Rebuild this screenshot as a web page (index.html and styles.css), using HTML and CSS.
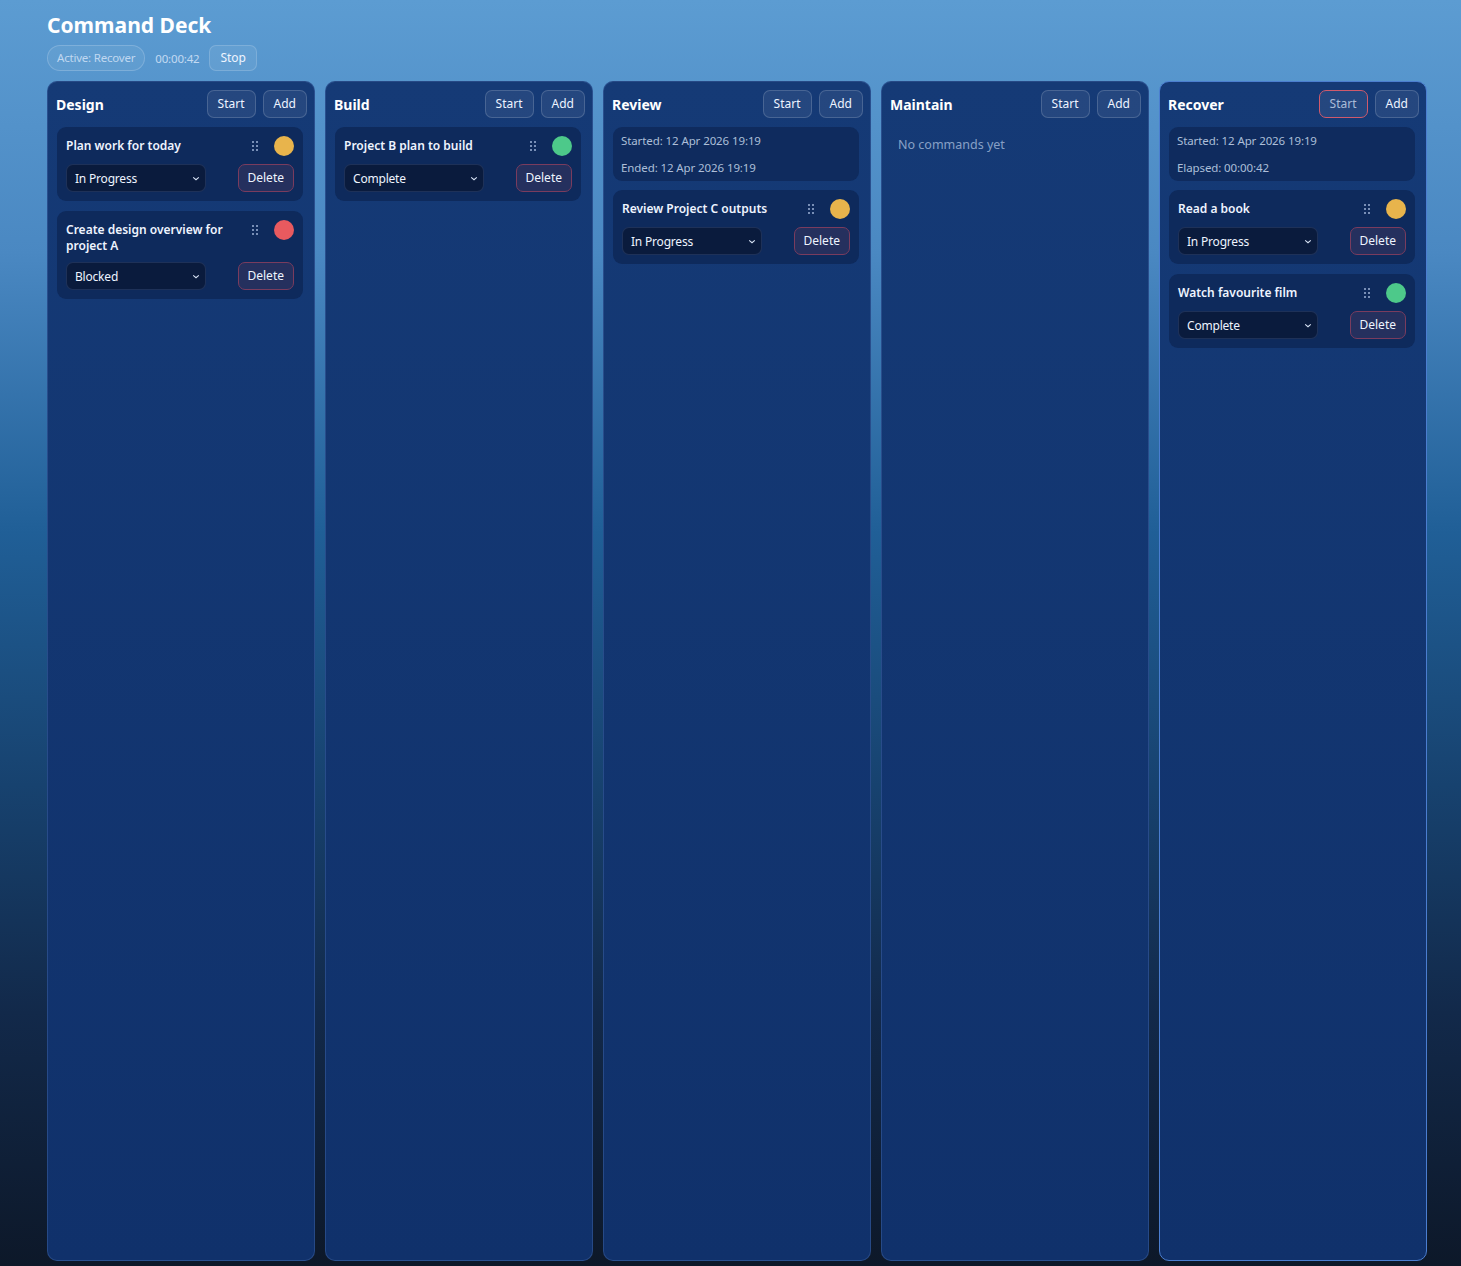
FILE: index.html
```html
<!DOCTYPE html>
<html lang="en">
<head>
<meta charset="utf-8">
<title>Command Deck</title>
<link rel="stylesheet" href="styles.css">
</head>
<body>
<div class="app">
  <header class="top">
    <h1 class="title">Command Deck</h1>
    <div class="status">
      <span class="pill">Active: Recover</span>
      <span class="timer">00:00:42</span>
      <button class="btn">Stop</button>
    </div>
  </header>
  <main class="board">
    <section class="col">
      <div class="col-head">
        <h2 class="col-title">Design</h2>
        <div class="col-actions"><button class="btn">Start</button><button class="btn">Add</button></div>
      </div>
      <div class="card">
        <div class="card-top">
          <div class="card-title">Plan work for today</div>
          <span class="grip"><i></i><i></i><i></i><i></i><i></i><i></i></span>
          <span class="dot amber"></span>
        </div>
        <div class="card-bottom">
          <div class="select">In Progress<svg viewBox="0 0 10 6" class="chev"><path d="M1.5 1.5 L5 4.5 L8.5 1.5" fill="none" stroke="currentColor" stroke-width="1.3"/></svg></div>
          <button class="btn del">Delete</button>
        </div>
      </div>
      <div class="card">
        <div class="card-top">
          <div class="card-title">Create design overview for project A</div>
          <span class="grip"><i></i><i></i><i></i><i></i><i></i><i></i></span>
          <span class="dot red"></span>
        </div>
        <div class="card-bottom">
          <div class="select">Blocked<svg viewBox="0 0 10 6" class="chev"><path d="M1.5 1.5 L5 4.5 L8.5 1.5" fill="none" stroke="currentColor" stroke-width="1.3"/></svg></div>
          <button class="btn del">Delete</button>
        </div>
      </div>
    </section>

    <section class="col">
      <div class="col-head">
        <h2 class="col-title">Build</h2>
        <div class="col-actions"><button class="btn">Start</button><button class="btn">Add</button></div>
      </div>
      <div class="card">
        <div class="card-top">
          <div class="card-title">Project B plan to build</div>
          <span class="grip"><i></i><i></i><i></i><i></i><i></i><i></i></span>
          <span class="dot green"></span>
        </div>
        <div class="card-bottom">
          <div class="select">Complete<svg viewBox="0 0 10 6" class="chev"><path d="M1.5 1.5 L5 4.5 L8.5 1.5" fill="none" stroke="currentColor" stroke-width="1.3"/></svg></div>
          <button class="btn del">Delete</button>
        </div>
      </div>
    </section>

    <section class="col">
      <div class="col-head">
        <h2 class="col-title">Review</h2>
        <div class="col-actions"><button class="btn">Start</button><button class="btn">Add</button></div>
      </div>
      <div class="times">
        <div>Started: 12 Apr 2026 19:19</div>
        <div>Ended: 12 Apr 2026 19:19</div>
      </div>
      <div class="card">
        <div class="card-top">
          <div class="card-title">Review Project C outputs</div>
          <span class="grip"><i></i><i></i><i></i><i></i><i></i><i></i></span>
          <span class="dot amber"></span>
        </div>
        <div class="card-bottom">
          <div class="select">In Progress<svg viewBox="0 0 10 6" class="chev"><path d="M1.5 1.5 L5 4.5 L8.5 1.5" fill="none" stroke="currentColor" stroke-width="1.3"/></svg></div>
          <button class="btn del">Delete</button>
        </div>
      </div>
    </section>

    <section class="col">
      <div class="col-head">
        <h2 class="col-title">Maintain</h2>
        <div class="col-actions"><button class="btn">Start</button><button class="btn">Add</button></div>
      </div>
      <p class="empty">No commands yet</p>
    </section>

    <section class="col active">
      <div class="col-head">
        <h2 class="col-title">Recover</h2>
        <div class="col-actions"><button class="btn running">Start</button><button class="btn">Add</button></div>
      </div>
      <div class="times">
        <div>Started: 12 Apr 2026 19:19</div>
        <div>Elapsed: 00:00:42</div>
      </div>
      <div class="card">
        <div class="card-top">
          <div class="card-title">Read a book</div>
          <span class="grip"><i></i><i></i><i></i><i></i><i></i><i></i></span>
          <span class="dot amber"></span>
        </div>
        <div class="card-bottom">
          <div class="select">In Progress<svg viewBox="0 0 10 6" class="chev"><path d="M1.5 1.5 L5 4.5 L8.5 1.5" fill="none" stroke="currentColor" stroke-width="1.3"/></svg></div>
          <button class="btn del">Delete</button>
        </div>
      </div>
      <div class="card">
        <div class="card-top">
          <div class="card-title">Watch favourite film</div>
          <span class="grip"><i></i><i></i><i></i><i></i><i></i><i></i></span>
          <span class="dot green"></span>
        </div>
        <div class="card-bottom">
          <div class="select">Complete<svg viewBox="0 0 10 6" class="chev"><path d="M1.5 1.5 L5 4.5 L8.5 1.5" fill="none" stroke="currentColor" stroke-width="1.3"/></svg></div>
          <button class="btn del">Delete</button>
        </div>
      </div>
    </section>
  </main>
</div>
</body>
</html>
```
FILE: styles.css
```css
* { box-sizing: border-box; }
html, body { margin: 0; height: 100%; }
body {
  font-family: "Noto Sans", "Open Sans", sans-serif;
  color: #e6eefc;
  background: linear-gradient(180deg, #5c9cd2 0%, #4a88c2 20%, #205f97 42%, #17426f 62%, #12294a 80%, #0d1829 100%);
  min-height: 1266px;
}
.app {
  padding: 10px 0 5px 47px;
  height: 1266px;
  display: flex;
  flex-direction: column;
}
.top { display: flex; flex-direction: column; gap: 5px; margin-bottom: 10px; }
.title {
  margin: 0;
  font-size: 21px;
  line-height: 30px;
  font-weight: 700;
  color: #ffffff;
}
.status { display: flex; align-items: center; gap: 10px; height: 26px; }
.pill {
  height: 26px;
  padding: 0 9px;
  border-radius: 13px;
  border: 1px solid rgba(255,255,255,0.18);
  background: rgba(255,255,255,0.06);
  font-size: 11.5px;
  line-height: 24px;
  letter-spacing: -0.2px;
  color: rgba(230,240,255,0.72);
}
.timer { font-size: 11.5px; letter-spacing: -0.2px; color: rgba(230,240,255,0.75); }
.btn {
  font-family: inherit;
  height: 26px;
  padding: 0 10px;
  border-radius: 7px;
  border: 1px solid rgba(255,255,255,0.16);
  background: rgba(255,255,255,0.07);
  color: #eef4ff;
  font-size: 12px;
  line-height: 24px;
  cursor: pointer;
}
.board {
  flex: 1;
  display: flex;
  gap: 10px;
  align-items: stretch;
  min-height: 0;
}
.col {
  width: 268px;
  flex: none;
  background: linear-gradient(180deg, #153a76 0%, #10316b 100%);
  border: 1px solid rgba(120,160,230,0.22);
  border-radius: 10px;
  padding: 8px 9px;
  display: flex;
  flex-direction: column;
  gap: 9px;
}
.col.active { border-color: #4b7ed0; }
.col-head { display: flex; align-items: center; justify-content: space-between; height: 28px; margin-right: -2px; }
.col-title { margin: 0 0 0 -1px; font-size: 14px; font-weight: 700; color: #fff; }
.col-actions { display: flex; gap: 7px; }
.col-actions .btn { height: 28px; line-height: 26px; }
.btn.running { border-color: #d05a6c; color: rgba(230,240,255,0.7); }
.card {
  background: #0e2a5c;
  border-radius: 9px;
  padding: 9px;
  display: flex;
  flex-direction: column;
  gap: 8px;
  margin: 0 2px 1px 0;
}
.card-top { display: flex; align-items: flex-start; gap: 8px; min-height: 20px; }
.card-title {
  flex: 1;
  font-size: 12px;
  font-weight: 600;
  line-height: 16px;
  color: #eef4ff;
  padding-top: 2px;
}
.grip {
  width: 6px;
  display: grid;
  grid-template-columns: 2px 2px;
  column-gap: 2px;
  row-gap: 2px;
  margin-top: 5px;
  margin-right: 8px;
}
.grip i { width: 2px; height: 2px; border-radius: 1px; background: #9db2d6; display: block; }
.dot { width: 20px; height: 20px; border-radius: 50%; flex: none; }
.dot.amber { background: #e8b44c; }
.dot.red { background: #e85a5f; }
.dot.green { background: #4dc98a; }
.card-bottom { display: flex; justify-content: space-between; align-items: center; }
.select {
  width: 140px;
  height: 28px;
  border-radius: 7px;
  background: #0a1b3d;
  border: 1px solid rgba(120,150,210,0.18);
  display: flex;
  align-items: center;
  justify-content: space-between;
  padding: 0 5px 0 8px;
  font-size: 12px;
  letter-spacing: -0.2px;
  color: #eef4ff;
}
.chev { width: 8px; height: 5px; color: #dbe5f7; }
.btn.del {
  height: 28px;
  line-height: 26px;
  padding: 0 9px;
  background: #25305e;
  border-color: #7a3c5e;
}
.times {
  background: #0f2b5e;
  border-radius: 9px;
  padding: 0 8px;
  font-size: 11.5px;
  line-height: 27px;
  letter-spacing: -0.1px;
  color: rgba(220,232,252,0.78);
  margin-right: 2px;
}
.empty { margin: 9px 0 0 7px; font-size: 12.5px; color: rgba(210,225,250,0.62); }
```
